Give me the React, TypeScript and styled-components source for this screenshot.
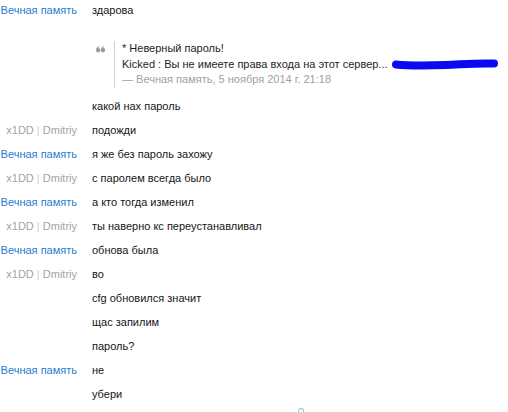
import React from 'react';
import styled, { createGlobalStyle } from 'styled-components';

const Global = createGlobalStyle`
  html, body {
    margin: 0;
    padding: 0;
    background: #fff;
  }
  body {
    font-family: Tahoma, "Liberation Sans", Arial, sans-serif;
    font-size: 11px;
    color: #161616;
  }
`;

interface Message {
  author?: string;
  own?: boolean;
  text: string;
}

const messages: Message[] = [
  { author: 'x1DD | Dmitriy', text: 'подожди' },
  { author: 'Вечная память', own: true, text: 'я же без пароль захожу' },
  { author: 'x1DD | Dmitriy', text: 'с паролем всегда было' },
  { author: 'Вечная память', own: true, text: 'а кто тогда изменил' },
  { author: 'x1DD | Dmitriy', text: 'ты наверно кс переустанавливал' },
  { author: 'Вечная память', own: true, text: 'обнова была' },
  { author: 'x1DD | Dmitriy', text: 'во' },
  { text: 'cfg обновился значит' },
  { text: 'щас запилим' },
  { text: 'пароль?' },
  { author: 'Вечная память', own: true, text: 'не' },
  { text: 'убери' },
];

const Log = styled.div`
  display: flex;
  flex-direction: column;
  width: 508px;
  height: 412px;
  overflow: hidden;
`;

const Row = styled.div`
  display: grid;
  grid-template-columns: 77px minmax(0, 1fr);
  column-gap: 15px;
  line-height: 20px;
  height: 20px;
  padding-bottom: 4px;
  flex-shrink: 0;
`;

const QuoteRow = styled(Row)`
  height: 68px;
`;

const Author = styled.div<{ $own?: boolean }>`
  text-align: right;
  white-space: nowrap;
  color: ${(p) => (p.$own ? '#1f7bd3' : '#a3a3a3')};
`;

const Sep = styled.span`
  color: #cfcfcf;
`;

const Text = styled.div`
  white-space: nowrap;
`;

const QuoteWrap = styled.div`
  display: flex;
  align-items: flex-start;
  margin: 17px 0 4px 4px;
`;

const QuoteMark = styled.div`
  width: 18px;
  padding-top: 5px;
  line-height: 0;
`;

const Quote = styled.div`
  border-left: 1px solid #cfcfcf;
  padding-left: 7px;
  line-height: 15.67px;
  white-space: nowrap;
  color: #1e1e1e;
`;

const Cite = styled.div`
  color: #a0a0a0;
`;

const Scribble = styled.svg`
  vertical-align: -3px;
  margin-left: 3px;
`;

const Spinner = styled.div`
  margin-left: 298px;
  width: 4px;
  height: 4px;
  border: 1px solid #8fc3dc;
  border-bottom: none;
  border-radius: 3px 3px 0 0;
  flex-shrink: 0;
`;

const renderAuthor = (name: string) => {
  const parts = name.split(' | ');
  if (parts.length < 2) return name;
  return (
    <>
      {parts[0]} <Sep>|</Sep> {parts[1]}
    </>
  );
};

const App: React.FC = () => (
  <>
    <Global />
    <Log>
      <Row>
        <Author $own>Вечная память</Author>
        <Text>здарова</Text>
      </Row>
      <QuoteRow>
        <div />
        <QuoteWrap>
          <QuoteMark>
            <svg width="9" height="7" viewBox="0 0 9 7">
              <path d="M0 4.2a2.2 2.2 0 1 0 2.4-2.2C2.6 1 3.3.4 4 .2L3.6 0C1.8.3 0 1.8 0 4.2z" fill="#9a9a9a" />
              <path d="M4.8 4.2a2.2 2.2 0 1 0 2.4-2.2c.2-1 .9-1.6 1.6-1.8L8.4 0C6.6.3 4.8 1.8 4.8 4.2z" fill="#9a9a9a" />
            </svg>
          </QuoteMark>
          <Quote>
            <div>* Неверный пароль!</div>
            <div>
              Kicked : Вы не имеете права входа на этот сервер...
              <Scribble width="108" height="13" viewBox="0 0 108 13">
                <path
                  d="M5 6.5 C20 8, 40 7.5, 55 7 S82 5, 103 5.5"
                  stroke="#0a0af0"
                  strokeWidth="8"
                  strokeLinecap="round"
                  fill="none"
                />
              </Scribble>
            </div>
            <Cite>— Вечная память, 5 ноября 2014 г. 21:18</Cite>
          </Quote>
        </QuoteWrap>
      </QuoteRow>
      <Row>
        <div />
        <Text>какой нах пароль</Text>
      </Row>
      {messages.map((m, i) => (
        <Row key={i}>
          <Author $own={m.own}>{m.author ? renderAuthor(m.author) : ''}</Author>
          <Text>{m.text}</Text>
        </Row>
      ))}
      <Spinner />
    </Log>
  </>
);

export default App;
